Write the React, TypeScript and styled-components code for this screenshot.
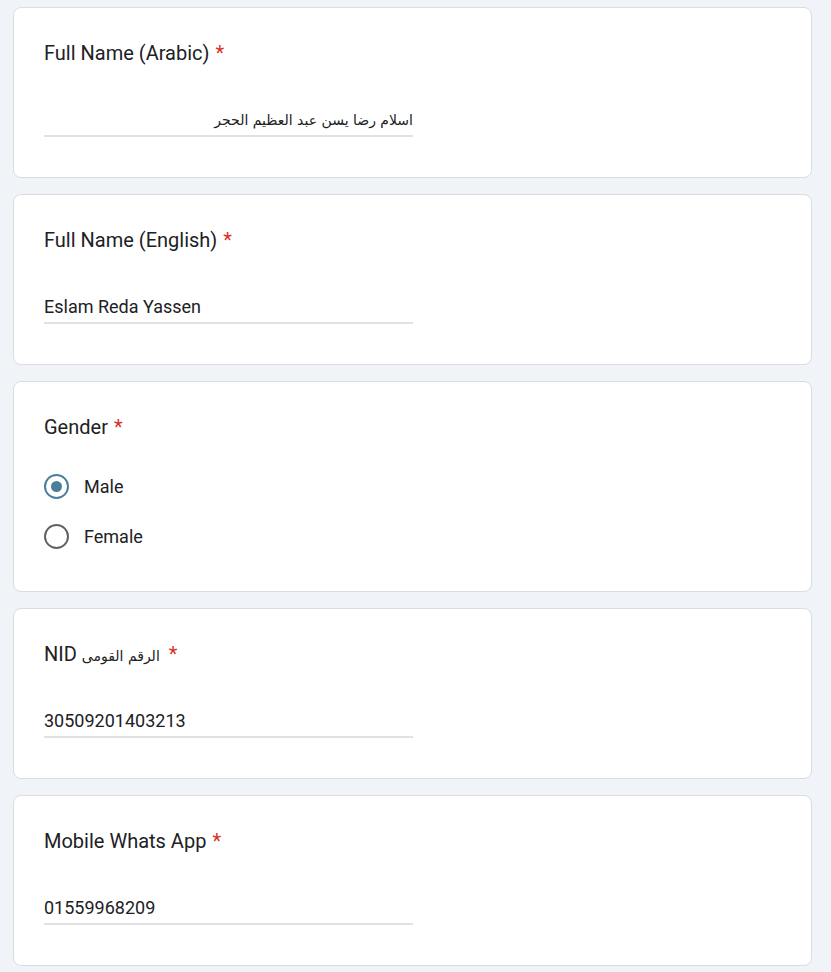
import React from "react";
import styled, { createGlobalStyle } from "styled-components";

const Global = createGlobalStyle`
  html, body { margin: 0; padding: 0; background: #f0f4f8; }
  body { font-family: Roboto, "Noto Sans", Arial, sans-serif; color: #202124; }
`;

const Page = styled.div`
  width: 799px;
  padding: 7px 0 0 13px;
  display: flex;
  flex-direction: column;
  gap: 16px;
`;

const Card = styled.div`
  background: #fff;
  border: 1px solid #dadce0;
  border-radius: 8px;
  padding: 32px 30px 40px;
  display: flex;
  flex-direction: column;
`;

const Title = styled.div`
  font-size: 20px;
  line-height: 26px;
  height: 26px;
  font-weight: 400;
  white-space: nowrap;
`;

const Star = styled.span<{ $gap?: number }>`
  color: #d93025;
  margin-left: ${(p) => p.$gap ?? 6}px;
`;

const Arabic = styled.span`
  font-family: "DejaVu Sans", "Noto Sans", sans-serif;
  font-size: 14px;
  line-height: 0;
`;

const Input = styled.div<{ $rtl?: boolean }>`
  margin-top: 42px;
  width: 369px;
  line-height: 24px;
  height: 24px;
  padding-bottom: 3px;
  border-bottom: 2px solid #e0e1e3;
  text-align: ${(p) => (p.$rtl ? "right" : "left")};
  direction: ${(p) => (p.$rtl ? "rtl" : "ltr")};
  font-family: ${(p) => (p.$rtl ? '"DejaVu Sans", Arial, sans-serif' : "inherit")};
  font-size: ${(p) => (p.$rtl ? "14px" : "18px")};
`;

const Options = styled.div`
  margin: 34px 0 2px;
  display: flex;
  flex-direction: column;
  gap: 25px;
`;

const Option = styled.label`
  display: flex;
  align-items: center;
  gap: 15px;
  height: 25px;
  font-size: 18px;
  line-height: 24px;
`;

const Radio = styled.span<{ $checked?: boolean }>`
  box-sizing: border-box;
  width: 25px;
  height: 25px;
  border-radius: 50%;
  border: 2px solid ${(p) => (p.$checked ? "#4a7e9b" : "#5f6368")};
  display: flex;
  align-items: center;
  justify-content: center;
  &::after {
    content: "";
    width: 11px;
    height: 11px;
    border-radius: 50%;
    background: ${(p) => (p.$checked ? "#4a7e9b" : "transparent")};
  }
`;

export default function App() {
  return (
    <>
      <Global />
      <Page>
        <Card>
          <Title>
            Full Name (Arabic)<Star>*</Star>
          </Title>
          <Input $rtl>اسلام رضا يسن عبد العظيم الحجر</Input>
        </Card>
        <Card>
          <Title>
            Full Name (English)<Star>*</Star>
          </Title>
          <Input>Eslam Reda Yassen</Input>
        </Card>
        <Card>
          <Title>
            Gender<Star>*</Star>
          </Title>
          <Options>
            <Option>
              <Radio $checked />
              Male
            </Option>
            <Option>
              <Radio />
              Female
            </Option>
          </Options>
        </Card>
        <Card>
          <Title>
            NID <Arabic>الرقم القومى</Arabic>
            <Star $gap={9}>*</Star>
          </Title>
          <Input>30509201403213</Input>
        </Card>
        <Card>
          <Title>
            Mobile Whats App<Star>*</Star>
          </Title>
          <Input>01559968209</Input>
        </Card>
      </Page>
    </>
  );
}
